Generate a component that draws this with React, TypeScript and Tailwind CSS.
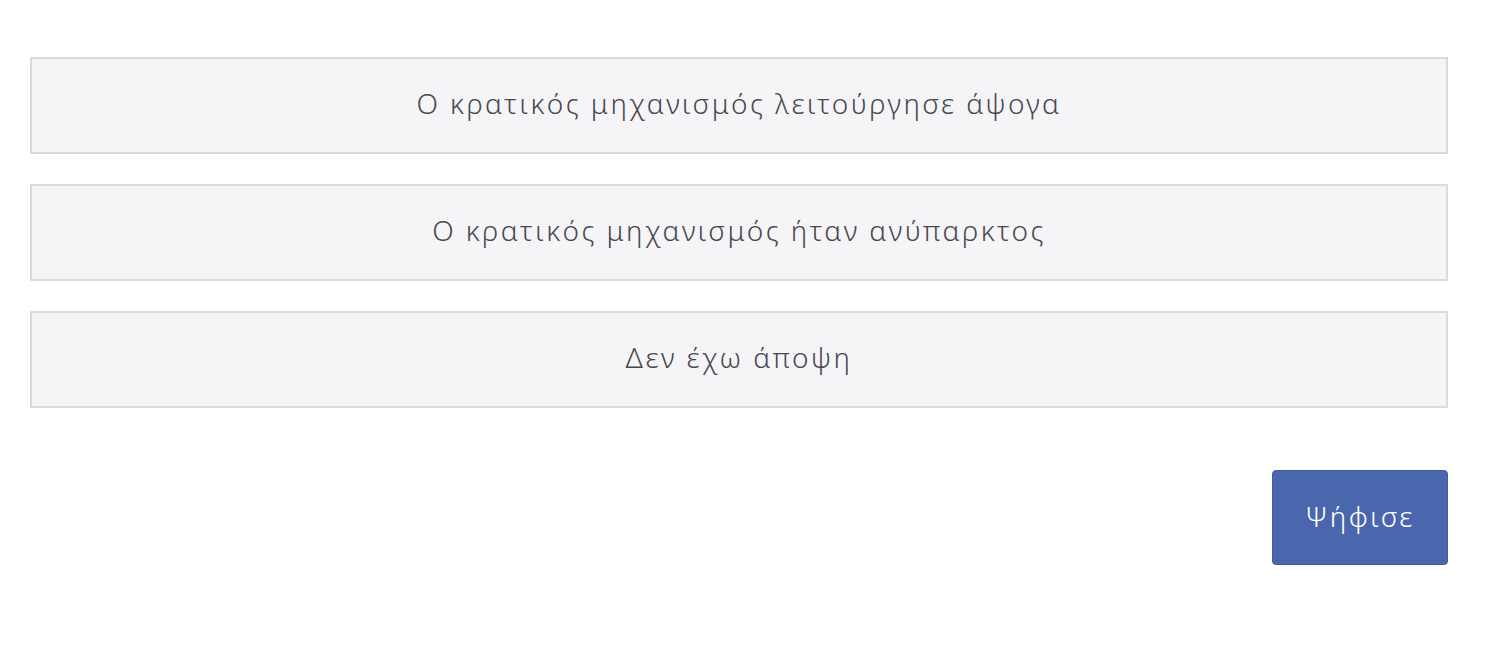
const options = [
  "Ο κρατικός μηχανισμός λειτούργησε άψογα",
  "Ο κρατικός μηχανισμός ήταν ανύπαρκτος",
  "Δεν έχω άποψη",
];

export default function App() {
  return (
    <main
      className="min-h-[660px] bg-white pl-[30px] pt-[57px]"
      style={{ fontFamily: '"Noto Sans", "Open Sans", sans-serif' }}
    >
      <div className="flex w-[1418px] flex-col gap-[30px]">
        {options.map((o) => (
          <button
            key={o}
            type="button"
            className="flex h-[97px] items-center justify-center border-2 border-[#dadadc] bg-[#f5f5f7] pb-[6px] text-[28px] leading-none font-[350] tracking-[2.45px] text-[#48484e]"
          >
            {o}
          </button>
        ))}
      </div>
      <div className="mt-[62px] flex w-[1418px] justify-end">
        <button
          type="button"
          className="flex h-[95px] w-[176px] items-center justify-center rounded-[4px] border border-[#3f5c9f] bg-[#4a67ae] pb-[4px] text-[28px] leading-none font-[350] tracking-[2.45px] text-white"
        >
          Ψήφισε
        </button>
      </div>
    </main>
  );
}
